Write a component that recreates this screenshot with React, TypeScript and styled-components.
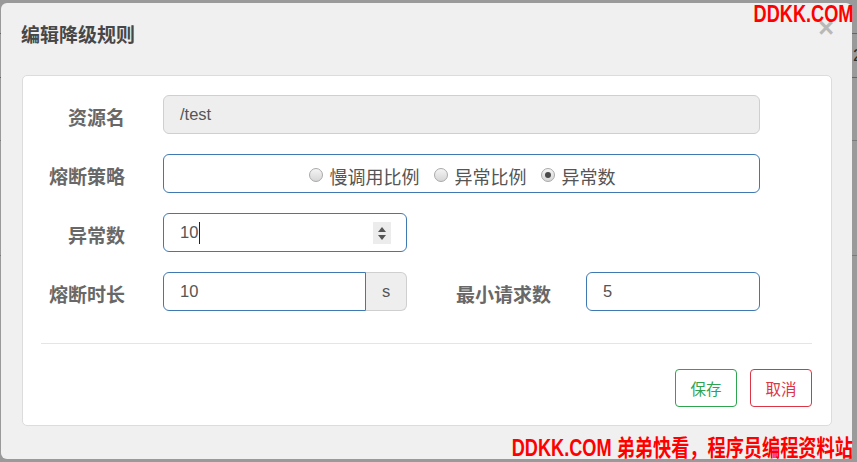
import React from "react";
import styled, { createGlobalStyle } from "styled-components";

const FONT = `"Liberation Sans", "Noto Sans CJK SC", sans-serif`;

const GlobalStyle = createGlobalStyle`
  html, body { margin: 0; padding: 0; }
  body { background: #9a9a9a; font-family: ${FONT}; }
  * { box-sizing: border-box; }
`;

const Page = styled.div`
  position: relative;
  width: 857px;
  height: 462px;
  overflow: hidden;
  background: #9a9a9a;
`;

const BehindRows = styled.div`
  display: flex;
  flex-direction: column;
  padding-top: 33px;
`;

const BehindRow = styled.div<{ $h: number; $line: string }>`
  height: ${(p) => p.$h}px;
  border-top: 1px solid ${(p) => p.$line};
  display: flex;
  justify-content: flex-end;
  align-items: center;
  font-size: 17px;
  color: #2a2a2a;
`;

const BehindCell = styled.span`
  width: 4px;
  overflow: hidden;
  white-space: nowrap;
`;

const Modal = styled.div`
  position: absolute;
  left: 1px;
  top: 3px;
  width: 851px;
  height: 456px;
  background: #f0f0f0;
  border-radius: 6px;
  display: flex;
  flex-direction: column;
`;

const Header = styled.div`
  height: 72px;
  padding: 22px 20px 0 20px;
  display: flex;
  justify-content: space-between;
  align-items: flex-start;
`;

const Title = styled.h4`
  margin: 0;
  font-size: 19px;
  line-height: 22px;
  font-weight: bold;
  color: #474747;
  font-family: ${FONT};
`;

const Close = styled.span`
  font-size: 27px;
  font-weight: bold;
  line-height: 22px;
  color: #b8b8b8;
  margin-right: -2px;
  margin-top: -8px;
`;

const Panel = styled.div`
  margin: 0 20px 0 21px;
  height: 351px;
  background: #fff;
  border: 1px solid #dcdcdc;
  border-radius: 5px;
  padding: 19px 0 0 0;
  display: flex;
  flex-direction: column;
`;

const FormRow = styled.div`
  display: flex;
  align-items: center;
  height: 39px;
  margin-bottom: 20px;
`;

const Label = styled.label<{ $w: number; $gap: number }>`
  width: ${(p) => p.$w}px;
  margin-right: ${(p) => p.$gap}px;
  text-align: right;
  font-size: 19px;
  font-weight: bold;
  color: #686868;
  padding-top: 4px;
`;

const Input = styled.div<{ $w: number; $disabled?: boolean; $group?: boolean }>`
  position: relative;
  width: ${(p) => p.$w}px;
  height: 39px;
  border: 1px solid ${(p) => (p.$disabled ? "#cfcfcf" : "#3f79b3")};
  background: ${(p) => (p.$disabled ? "#eeeeee" : "#fff")};
  border-radius: ${(p) => (p.$group ? "6px 0 0 6px" : "6px")};
  padding: 0 16px;
  display: flex;
  align-items: center;
  font-size: 16.5px;
  color: #555;
`;

const Addon = styled.div`
  width: 41px;
  height: 39px;
  border: 1px solid #cfcfcf;
  border-left: none;
  border-radius: 0 6px 6px 0;
  background: #eee;
  display: flex;
  align-items: center;
  justify-content: center;
  font-size: 16.5px;
  color: #555;
`;

const Caret = styled.span`
  display: inline-block;
  width: 1px;
  height: 22px;
  background: #222;
  margin-left: 1px;
`;

const Spinner = styled.span`
  position: absolute;
  right: 15px;
  top: 8px;
  width: 18px;
  height: 22px;
  background: #ececec;
  display: flex;
  flex-direction: column;
  align-items: center;
  justify-content: center;
  gap: 3px;
`;

const Tri = styled.span<{ $down?: boolean }>`
  width: 0;
  height: 0;
  border-left: 4px solid transparent;
  border-right: 4px solid transparent;
  ${(p) => (p.$down ? "border-top: 5px solid #555;" : "border-bottom: 5px solid #555;")}
`;

const RadioGroup = styled.div`
  flex: 1;
  display: flex;
  justify-content: center;
  align-items: center;
  gap: 14px;
  padding-top: 4px;
  padding-left: 1px;
`;

const RadioItem = styled.span`
  display: inline-flex;
  align-items: center;
  gap: 7px;
  font-size: 18px;
  color: #555;
`;

const RadioDot = styled.span<{ $checked?: boolean }>`
  width: 14px;
  height: 14px;
  border-radius: 50%;
  border: 1px solid #a9a9a9;
  background: linear-gradient(#f4f4f4, #d6d6d6);
  display: inline-flex;
  align-items: center;
  justify-content: center;
  margin-top: -2px;
  &::after {
    content: "";
    width: 6px;
    height: 6px;
    border-radius: 50%;
    background: ${(p) => (p.$checked ? "#4a4a4a" : "transparent")};
  }
`;

const Divider = styled.hr`
  margin: 12px 19px 0 18px;
  border: none;
  border-top: 1px solid #e5e5e5;
  height: 0;
`;

const Footer = styled.div`
  display: flex;
  justify-content: flex-end;
  gap: 13px;
  padding: 25px 19px 0 0;
`;

const Btn = styled.button<{ $color: string }>`
  width: 62px;
  height: 38px;
  border: 1px solid ${(p) => p.$color};
  color: ${(p) => p.$color};
  background: #fff;
  border-radius: 4px;
  font-size: 15.5px;
  font-family: ${FONT};
  padding: 0;
`;

const Watermark = styled.div<{ $top?: number; $bottom?: number }>`
  position: absolute;
  right: 4px;
  ${(p) => (p.$top !== undefined ? `top: ${p.$top}px;` : "")}
  ${(p) => (p.$bottom !== undefined ? `bottom: ${p.$bottom}px;` : "")}
  color: #ff0000;
  font-weight: bold;
  font-size: 23px;
  line-height: 26px;
  white-space: nowrap;
  transform: scaleX(0.79);
  transform-origin: right center;
  font-family: ${FONT};
`;

export default function App() {
  return (
    <Page>
      <GlobalStyle />
      <BehindRows>
        <BehindRow $h={44} $line="#4d6a86">
          <BehindCell>2</BehindCell>
        </BehindRow>
        <BehindRow $h={63} $line="#4d6a86" />
        <BehindRow $h={115} $line="#7b7b7b" />
        <BehindRow $h={100} $line="#7b7b7b" />
      </BehindRows>

      <Modal>
        <Header>
          <Title>编辑降级规则</Title>
          <Close>×</Close>
        </Header>
        <Panel>
          <FormRow>
            <Label $w={102} $gap={38}>资源名</Label>
            <Input $w={597} $disabled>/test</Input>
          </FormRow>
          <FormRow>
            <Label $w={102} $gap={38}>熔断策略</Label>
            <Input $w={597}>
              <RadioGroup>
                <RadioItem>
                  <RadioDot />
                  慢调用比例
                </RadioItem>
                <RadioItem>
                  <RadioDot />
                  异常比例
                </RadioItem>
                <RadioItem>
                  <RadioDot $checked />
                  异常数
                </RadioItem>
              </RadioGroup>
            </Input>
          </FormRow>
          <FormRow>
            <Label $w={102} $gap={38}>异常数</Label>
            <Input $w={244}>
              10
              <Caret />
              <Spinner>
                <Tri />
                <Tri $down />
              </Spinner>
            </Input>
          </FormRow>
          <FormRow>
            <Label $w={102} $gap={38}>熔断时长</Label>
            <Input $w={203} $group>10</Input>
            <Addon>s</Addon>
            <Label $w={144} $gap={35}>最小请求数</Label>
            <Input $w={174}>5</Input>
          </FormRow>
          <Divider />
          <Footer>
            <Btn $color="#2ea44f">保存</Btn>
            <Btn $color="#dc3545">取消</Btn>
          </Footer>
        </Panel>
      </Modal>

      <Watermark $top={1}>DDKK.COM</Watermark>
      <Watermark $bottom={1}>DDKK.COM 弟弟快看，程序员编程资料站</Watermark>
    </Page>
  );
}
